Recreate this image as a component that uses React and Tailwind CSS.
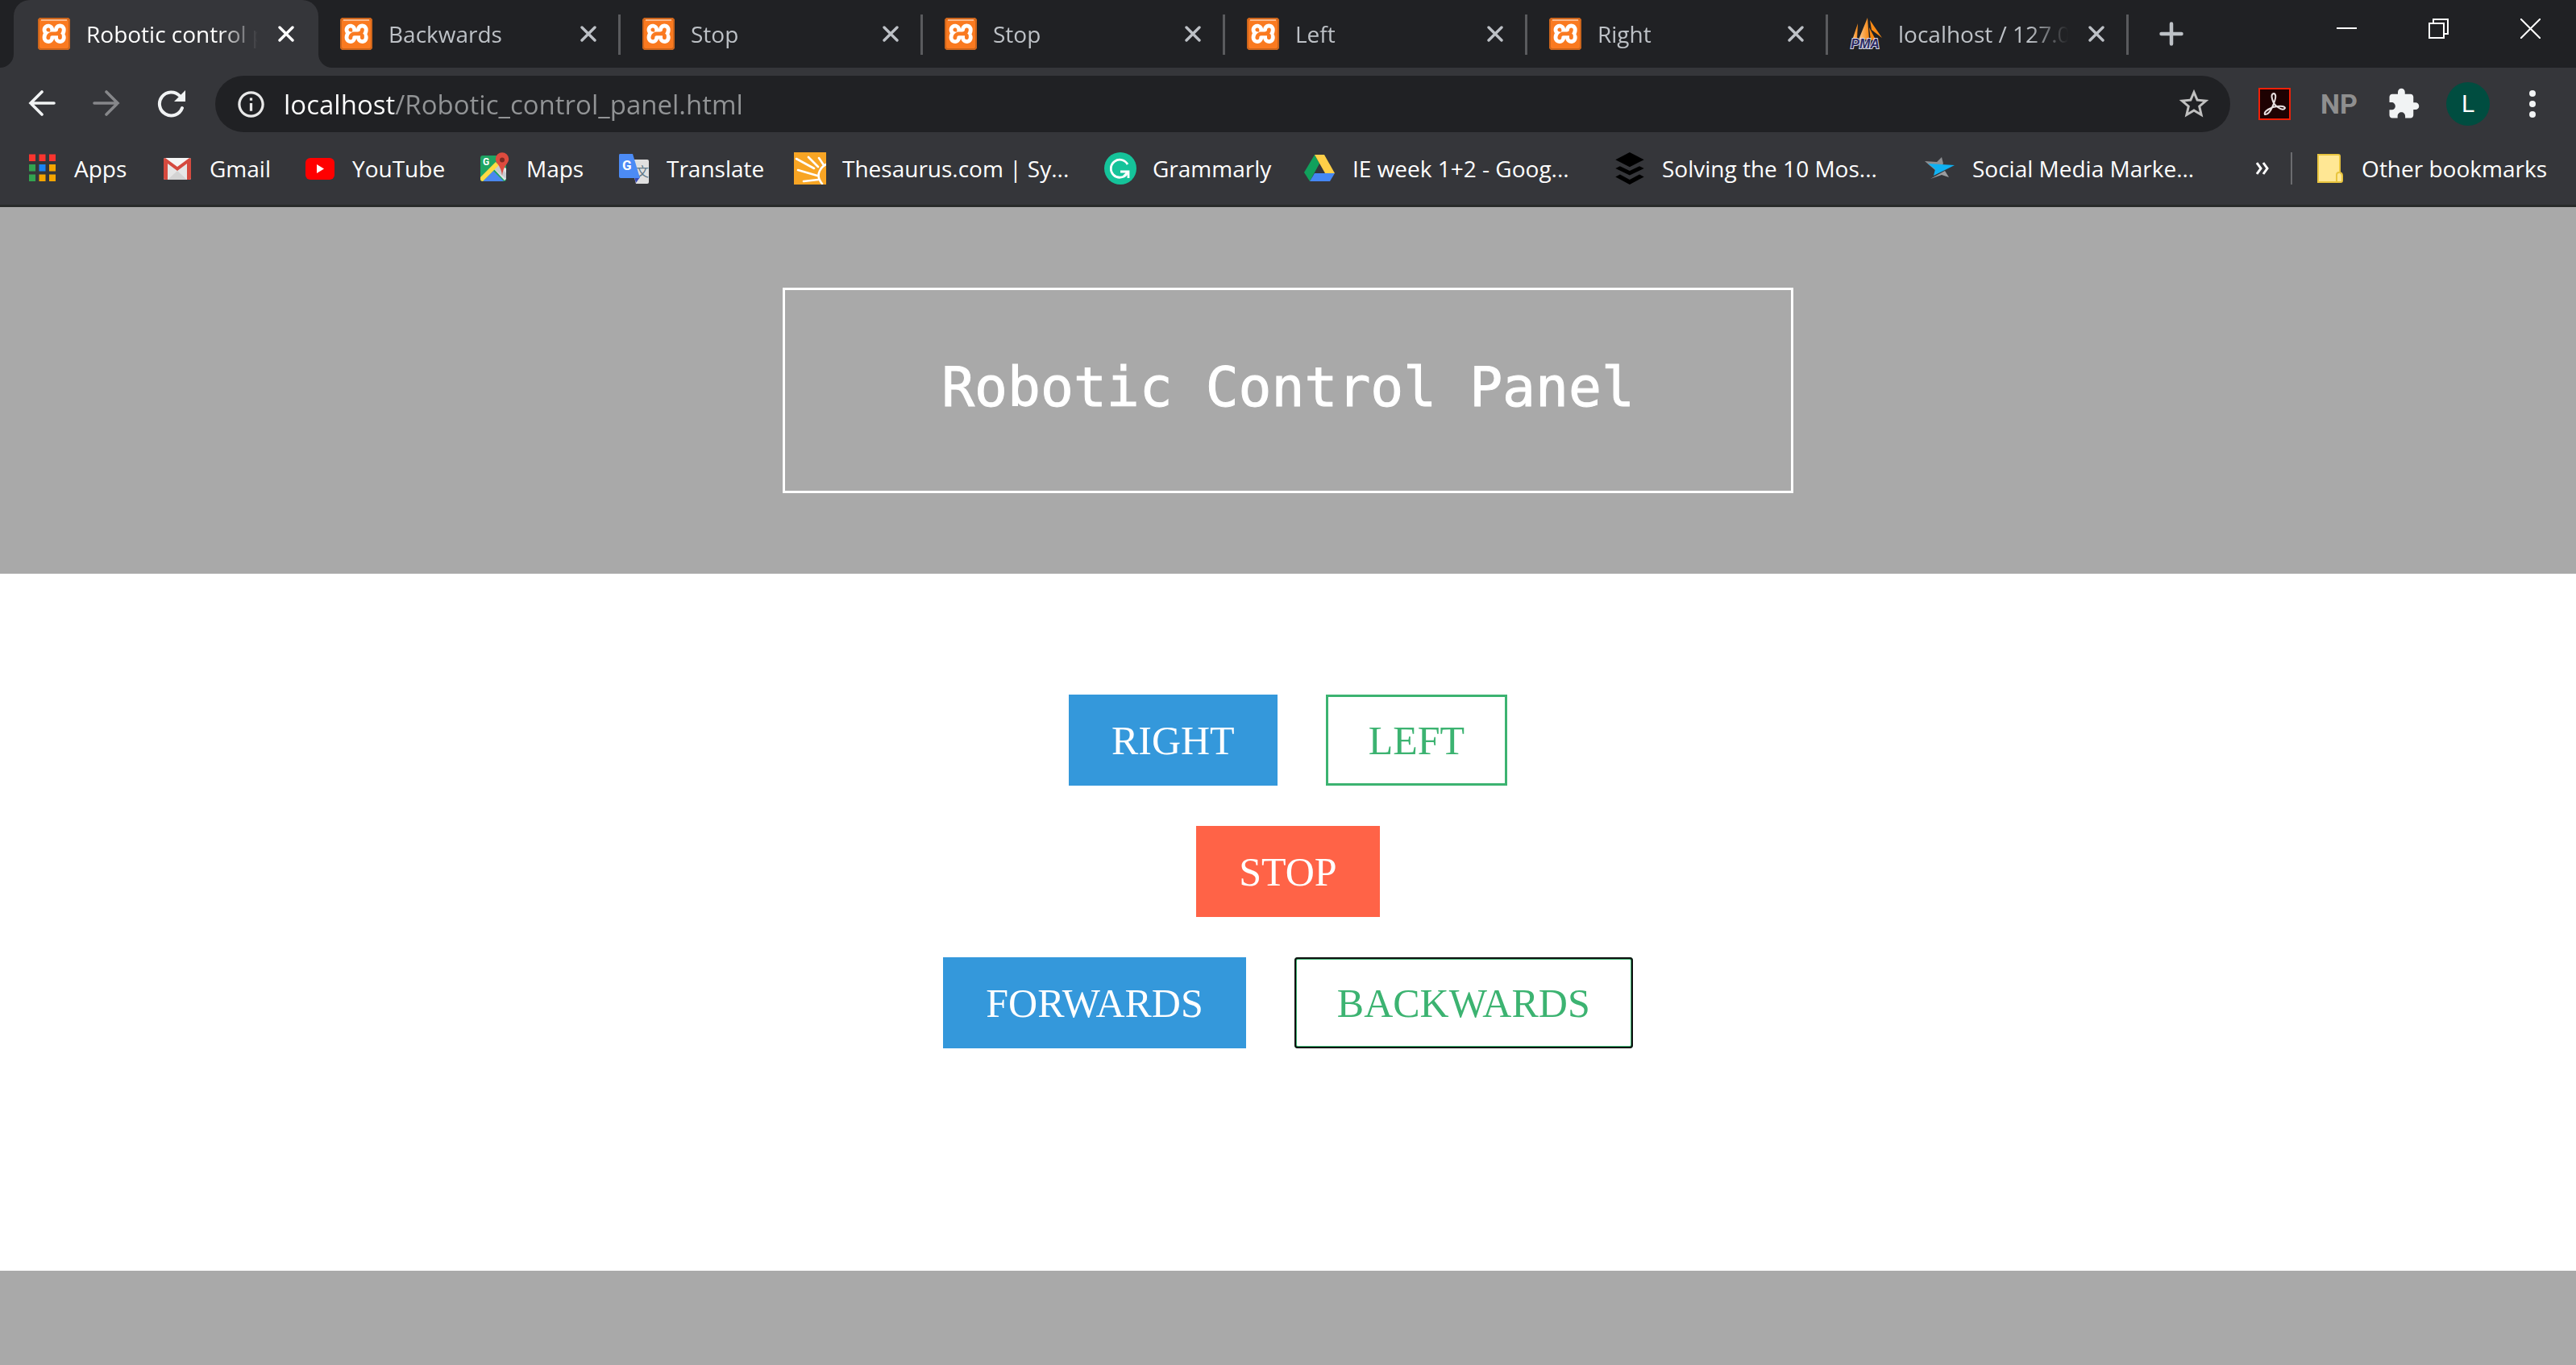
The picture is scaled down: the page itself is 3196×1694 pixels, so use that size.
import React from "react";
import { MdExtension, MdStarBorder, MdInfoOutline } from "react-icons/md";
import { SiXampp, SiBuffer } from "react-icons/si";

const XamppIcon = () => (
  <span className="relative flex size-10 items-center justify-center overflow-hidden rounded-sm bg-[#fa7a20]">
    <span className="absolute inset-1 bg-white" />
    <SiXampp className="relative size-10 text-[#fa7a20]" />
    <span className="absolute inset-0 rounded-sm border-2 border-[#b85c1b]/70" />
    <span className="absolute inset-x-1 top-0.5 h-0.5 bg-[#fbb98a]" />
  </span>
);

const PmaIcon = () => (
  <svg viewBox="0 0 40 40" className="size-10 overflow-visible">
    <defs>
      <linearGradient id="sail" x1="0" x2="1">
        <stop offset="0" stopColor="#fcc88c" />
        <stop offset="1" stopColor="#f7850f" />
      </linearGradient>
    </defs>
    <path d="M10 7 L3 28 L9 27 Z" fill="url(#sail)" />
    <path d="M22 0 L11 27 L24 27 Z" fill="url(#sail)" />
    <path d="M24 12 L26 28 L32 27 Z" fill="#f7850f" />
    <path d="M25 3 L27 15 L40 25 Z" fill="#f98a14" />
    <text x="19" y="38" textAnchor="middle" fontFamily="Liberation Sans, sans-serif" fontWeight="700" fontStyle="italic" fontSize="16" fill="#2b2a63" stroke="#d9d9e6" strokeWidth="2" paintOrder="stroke">PMA</text>
  </svg>
);

const CloseIcon = () => (
  <svg viewBox="0 0 20 20" className="size-5" stroke="currentColor" strokeWidth="3.4" strokeLinecap="round">
    <path d="M2 2 L18 18 M18 2 L2 18" />
  </svg>
);

const AppsIcon = () => {
  const colors = ["#f9352f", "#f9352f", "#f9352f", "#32a350", "#1a83f3", "#f5a500", "#32a350", "#f5a500", "#f5a500"];
  return (
    <svg viewBox="0 0 40 40" className="size-10">
      {colors.map((c, i) => (
        <rect key={i} x={4 + (i % 3) * 12.5} y={2.5 + Math.floor(i / 3) * 12.5} width="8" height="8.5" fill={c} />
      ))}
    </svg>
  );
};

const GmailIcon = () => (
  <svg viewBox="0 0 40 40" className="size-10">
    <rect x="3" y="7" width="34" height="27" rx="2" fill="#e6e6e6" />
    <path d="M8 34 L20 23 L32 34 Z" fill="#d3d3d3" />
    <path d="M5 7 H35 L20 19 Z" fill="#f5f5f5" />
    <path d="M3 9 Q3 7 5 7 L20 18 L35 7 Q37 7 37 9 V32 Q37 34 35 34 H32 V14 L20 23 L8 14 V34 H5 Q3 34 3 32 Z" fill="#d54a3f" />
  </svg>
);

const YoutubeIcon = () => (
  <svg viewBox="0 0 40 40" className="size-10">
    <rect x="2" y="7" width="36" height="27" rx="6" fill="#ff0000" />
    <path d="M16 15 V26 L25 20.5 Z" fill="#fff" />
  </svg>
);

const MapsIcon = () => (
  <svg viewBox="0 0 40 40" className="size-10">
    <rect x="3" y="4" width="32" height="32" rx="3" fill="#1fa463" />
    <path d="M19 20 L24 14 L35 20 V33 L33 35 Z" fill="#e3e3e3" />
    <path d="M19 20 L24 15 L35 26 V33 Z" fill="#c9ccd0" />
    <path d="M6 36 L19 23 L32 36 Z" fill="#4a87ee" />
    <path d="M3 31 L22 12 L26 16 L6 36 Q3 36 3 33 Z" fill="#ffda44" />
    <text x="6" y="16" fontFamily="Roboto, sans-serif" fontWeight="700" fontSize="12" fill="#fff">G</text>
    <path d="M30 29 Q29 20 24 14 A8.2 8.2 0 1 1 36 14 Q31 20 30 29 Z" fill="#de4b3e" />
    <circle cx="30" cy="9.5" r="3" fill="#7d2a22" />
  </svg>
);

const TranslateIcon = () => (
  <svg viewBox="0 0 40 40" className="size-10">
    <path d="M14 9 H36 Q38 9 38 11 V37 Q38 39 36 39 H22 Z" fill="#e0e0e0" />
    <text x="22" y="30" fontFamily="Noto Sans CJK SC, sans-serif" fontSize="16" fill="#607988">文</text>
    <path d="M20 31 H27 L22 38 Z" fill="#3749b5" />
    <path d="M2 2 H18 L27 32 H3 Q1 32 1 30 V4 Q1 2 2 2 Z" fill="#4c8bf5" />
    <text x="5" y="22" fontFamily="Roboto, sans-serif" fontWeight="700" fontSize="17" fill="#fff">G</text>
  </svg>
);

const ThesaurusIcon = () => (
  <svg viewBox="0 0 40 40" className="size-10" fill="none" stroke="#fff" strokeWidth="2.6" strokeLinecap="round">
    <rect width="40" height="40" fill="#f8a524" stroke="none" />
    <path d="M35 39 Q28 31 32 23 Q35 17 40 15 M3 8 L25 20 M18 6 L30 18 M31 7 L37 16 M5 22 L29 29 M12 36 L30 34" />
  </svg>
);

const GrammarlyIcon = () => (
  <svg viewBox="0 0 40 40" className="size-10" fill="none" stroke="#fff" strokeWidth="2.8">
    <circle cx="20" cy="20" r="20" fill="#15c39a" stroke="none" />
    <path d="M29 15 A11 11 0 1 0 28 27" />
    <path d="M20 24 H30 V32 M30 24 L24 30" />
  </svg>
);

const DriveIcon = () => (
  <svg viewBox="0 0 40 40" className="size-10">
    <path d="M13 3 L19 14 L7 36 L0 25 Z" fill="#11a05c" />
    <path d="M13 3 H25 L38 26 H26 Z" fill="#ffcf48" />
    <path d="M13 26 H38 L32 36 H7 Z" fill="#4587f4" />
  </svg>
);

const StarBrandIcon = () => (
  <svg viewBox="0 0 40 40" className="size-10">
    <path d="M1 11 L16 12 L22 6 L24 14 L16 24 Z" fill="#8d8f92" />
    <path d="M8 33 L26 23 L31 31 L22 28 Z" fill="#9a9c9f" />
    <path d="M5 14 L38 16 L12 29 L14 21 Z" fill="#0fb1f2" />
  </svg>
);

const FolderIcon = () => (
  <svg viewBox="0 0 40 40" className="size-10">
    <path d="M6 3 H31 Q33 3 33 5 V25 Q36 26 36 29 V35 Q36 37 34 37 H6 Z" fill="#ffe794" stroke="#e9c53f" strokeWidth="2" />
    <path d="M29 36 V28 Q29 25 32 25" fill="none" stroke="#e9c53f" strokeWidth="2" />
  </svg>
);

const AcrobatIcon = () => (
  <svg viewBox="0 0 40 40" className="size-10" fill="none" stroke="#e8e0e0" strokeWidth="2">
    <rect x="1" y="1" width="38" height="38" fill="#1e0202" stroke="#f02008" />
    <path d="M19 19 Q14 8 19 7 Q24 8 18 22 Q13 34 8 33 Q6 29 18 24 Q32 21 33 25 Q31 29 24 24 Q20 21 19 19" />
  </svg>
);

const tabs = [
  { title: "Robotic control panel", icon: XamppIcon, size: "w-[378px] pl-[30px]", active: true },
  { title: "Backwards", icon: XamppIcon, size: "w-[375px] pl-[27px]" },
  { title: "Stop", icon: XamppIcon, size: "w-[375px] pl-[27px]" },
  { title: "Stop", icon: XamppIcon, size: "w-[375px] pl-[27px]" },
  { title: "Left", icon: XamppIcon, size: "w-[375px] pl-[27px]" },
  { title: "Right", icon: XamppIcon, size: "w-[373px] pl-[27px]" },
  { title: "localhost / 127.0.0.1 / robot", icon: PmaIcon, size: "w-[373px] pl-[27px]" },
];

const bookmarks = [
  { label: "Apps", icon: AppsIcon, size: "w-[168px]" },
  { label: "Gmail", icon: GmailIcon, size: "w-[177px]" },
  { label: "YouTube", icon: YoutubeIcon, size: "w-[216px]" },
  { label: "Maps", icon: MapsIcon, size: "w-[174px]" },
  { label: "Translate", icon: TranslateIcon, size: "w-[218px]" },
  { label: "Thesaurus.com | Sy...", icon: ThesaurusIcon, size: "w-[385px]" },
  { label: "Grammarly", icon: GrammarlyIcon, size: "w-[248px]" },
  { label: "IE week 1+2 - Goog...", icon: DriveIcon, size: "w-[384px]" },
  { label: "Solving the 10 Mos...", icon: () => <SiBuffer className="size-10 text-black" />, size: "w-[385px]" },
  { label: "Social Media Marke...", icon: StarBrandIcon, size: "w-[385px]" },
];

function Tab({ title, icon: Icon, size, active }) {
  return (
    <div
      role="tab"
      aria-selected={!!active}
      className={`relative flex h-full shrink-0 items-center pr-[30px] ${size} ${active ? "rounded-t-[20px] bg-[#35363a] text-white" : "text-[#bdc1c6]"}`}
    >
      <Icon />
      <span className="ml-5 min-w-0 flex-1 overflow-hidden whitespace-nowrap [mask-image:linear-gradient(to_right,black_74%,transparent_96%)]">{title}</span>
      <button aria-label={`Close ${title}`} className="ml-4">
        <CloseIcon />
      </button>
      {active ? (
        <>
          <span className="absolute bottom-0 right-full size-[17px] bg-[#35363a]">
            <span className="block size-full rounded-br-[17px] bg-[#202124]" />
          </span>
          <span className="absolute bottom-0 left-full size-[17px] bg-[#35363a]">
            <span className="block size-full rounded-bl-[17px] bg-[#202124]" />
          </span>
        </>
      ) : (
        <span className="absolute right-0 top-[18px] h-[50px] w-[3px] bg-[#5a5b5e]" />
      )}
    </div>
  );
}

function ToolButton({ label, children }) {
  return (
    <button aria-label={label} className="flex h-[70px] w-20 shrink-0 items-center justify-center">
      {children}
    </button>
  );
}

function WindowButton({ label, children }) {
  return (
    <button aria-label={label} className="flex h-[71px] w-[114px] items-center justify-center">
      <svg viewBox="0 0 25 25" className="size-[25px]" fill="none" stroke="#fff" strokeWidth="2">
        {children}
      </svg>
    </button>
  );
}

function Browser() {
  return (
    <div className="border-b-[3px] border-[#292b2a] bg-[#35363a] font-['Open_Sans',sans-serif] text-[28px] leading-10 text-white">
      <div className="flex h-[84px] bg-[#202124] pl-[17px]">
        <div role="tablist" className="flex">
          {tabs.map((t, i) => (
            <Tab key={i} {...t} />
          ))}
        </div>
        <button aria-label="New tab" className="ml-[38px] flex items-center text-[#bdc1c6]">
          <svg viewBox="0 0 30 30" className="size-[30px]" stroke="currentColor" strokeWidth="4.5" strokeLinecap="round">
            <path d="M15 2.5 V27.5 M2.5 15 H27.5" />
          </svg>
        </button>
        <div className="ml-auto flex">
          <WindowButton label="Minimize">
            <path d="M0 12 H25" />
          </WindowButton>
          <WindowButton label="Restore">
            <path d="M1 6 H19 V24 H1 Z M6 6 V1 H24 V19 H19" />
          </WindowButton>
          <WindowButton label="Close window">
            <path d="M0 0 L25 25 M25 0 L0 25" />
          </WindowButton>
        </div>
      </div>

      <div className="flex items-center py-[10px] pl-3 pr-[14px]">
        <ToolButton label="Back">
          <svg viewBox="0 0 34 34" className="size-[34px]" fill="none" stroke="#f1f3f4" strokeWidth="3.6" strokeLinecap="round">
            <path d="M32 16 H3 M17 2 L3 16 L17 30" />
          </svg>
        </ToolButton>
        <ToolButton label="Forward">
          <svg viewBox="0 0 34 34" className="size-[34px]" fill="none" stroke="#86878a" strokeWidth="3.6" strokeLinecap="round">
            <path d="M2 16 H31 M17 2 L31 16 L17 30" />
          </svg>
        </ToolButton>
        <ToolButton label="Reload">
          <svg viewBox="0 0 36 36" className="size-9" fill="none" stroke="#f1f3f4" strokeWidth="4" strokeLinecap="round">
            <path d="M32 23 A14.5 14.5 0 1 1 29 8" />
            <path d="M36 1 V15 H22 Z" fill="#f1f3f4" stroke="none" />
          </svg>
        </ToolButton>
        <div className="mx-[15px] flex h-[70px] flex-1 items-center rounded-full bg-[#202124] pl-[25px] pr-[23px]">
          <MdInfoOutline className="size-[39px] text-[#e8e8e8]" />
          <input
            aria-label="Address"
            defaultValue="localhost/Robotic_control_panel.html"
            className="ml-[21px] h-[50px] min-w-0 flex-1 bg-[linear-gradient(90deg,#fff_139px,#929496_139px)] bg-clip-text text-[33px] text-transparent caret-white outline-none"
          />
          <button aria-label="Bookmark this page">
            <MdStarBorder className="size-[44px] text-[#c0c0c0]" />
          </button>
        </div>
        <ToolButton label="Adobe Acrobat">
          <AcrobatIcon />
        </ToolButton>
        <ToolButton label="NP">
          <span className="font-[Roboto,sans-serif] text-[34px] font-bold text-[#8f8f8f]">NP</span>
        </ToolButton>
        <ToolButton label="Extensions">
          <MdExtension className="size-[42px] text-[#f1f3f4]" />
        </ToolButton>
        <ToolButton label="Profile">
          <span className="flex size-[54px] items-center justify-center rounded-full bg-[#004d40] font-[Roboto,sans-serif] text-[30px]">L</span>
        </ToolButton>
        <ToolButton label="Menu">
          <svg viewBox="0 0 8 34" className="h-[34px] w-2" fill="#f1f3f4">
            <circle cx="4" cy="4" r="4" />
            <circle cx="4" cy="17" r="4" />
            <circle cx="4" cy="30" r="4" />
          </svg>
        </ToolButton>
      </div>

      <nav aria-label="Bookmarks" className="flex h-20 items-center whitespace-nowrap pb-[10px] pl-8 pr-9">
        {bookmarks.map(({ label, icon: Icon, size }) => (
          <a key={label} href="#" className={`flex shrink-0 items-center gap-5 ${size}`}>
            <Icon />
            {label}
          </a>
        ))}
        <button aria-label="More bookmarks" className="ml-auto">
          <svg viewBox="0 0 16 16" className="size-4" fill="none" stroke="#fff" strokeWidth="3">
            <path d="M1 1 L6 8 L1 15 M9 1 L14 8 L9 15" />
          </svg>
        </button>
        <span className="ml-[27px] h-10 w-0.5 bg-[#6b6c6f]" />
        <a href="#" className="ml-[26px] flex items-center gap-5">
          <FolderIcon />
          Other bookmarks
        </a>
      </nav>
    </div>
  );
}

const solid = "border-[3px] border-[#3498db] bg-[#3498db] text-white";
const outline = "border-[3px] border-[#3cb371] bg-white text-[#3cb371]";
const stop = "border-[3px] border-[#ff6347] bg-[#ff6347] text-white";
const focused = "rounded-[4px] border-[3px] border-[#3cb371] text-[#3cb371] outline-2 -outline-offset-2 outline-[#101010]";

function Control({ look, children }) {
  return <button className={`px-[50px] pb-6 pt-[26px] leading-[57px] ${look}`}>{children}</button>;
}

export default function App() {
  return (
    <div className="flex min-h-screen flex-col bg-white">
      <Browser />
      <header className="flex justify-center bg-[#a9a9a9] py-[100px]">
        <h1 className="border-[3px] border-white px-[194px] pb-[88px] pt-[81px] font-['DejaVu_Sans_Mono',monospace] text-[68px] leading-[80px] text-white [-webkit-text-stroke:1px_white]">
          Robotic Control Panel
        </h1>
      </header>
      <main className="flex flex-col items-center gap-[50px] pb-[276px] pt-[150px] font-['Liberation_Serif',serif] text-[50px]">
        <div className="flex gap-[60px]">
          <Control look={solid}>RIGHT</Control>
          <Control look={outline}>LEFT</Control>
        </div>
        <Control look={stop}>STOP</Control>
        <div className="flex gap-[60px]">
          <Control look={solid}>FORWARDS</Control>
          <Control look={focused}>BACKWARDS</Control>
        </div>
      </main>
      <footer className="flex-1 bg-[#a9a9a9]" />
    </div>
  );
}
